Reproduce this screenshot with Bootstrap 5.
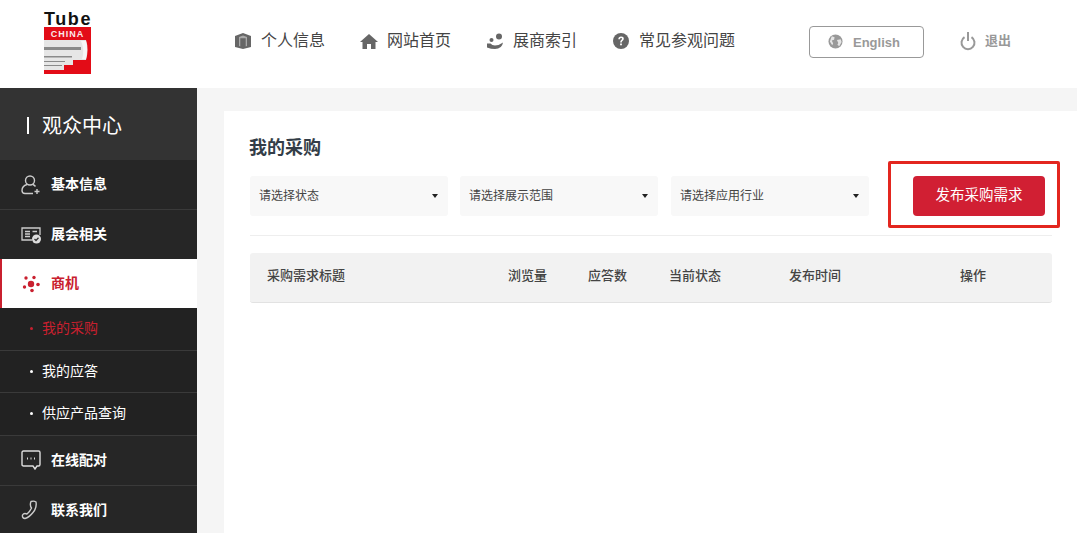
<!DOCTYPE html>
<html lang="zh-CN">
<head>
<meta charset="utf-8">
<title>观众中心</title>
<link rel="stylesheet" href="https://cdn.jsdelivr.net/npm/bootstrap@5.3.0/dist/css/bootstrap.min.css">
<style>
html,body{height:533px;overflow:hidden}
body{font-family:"Liberation Sans","Noto Sans CJK SC",sans-serif;background:#f5f5f5;color:#333;position:relative}
.top-bar{height:88px;background:#fff}
.logo-box{width:234px;flex:none;padding-left:44px;padding-top:12px;height:88px}
.logo-word{font-size:18px;font-weight:700;line-height:15px;letter-spacing:1.6px;color:#111;width:47px;white-space:nowrap}
.logo-art{display:block;width:47px;height:47px}
.top-link{width:126px;flex:none;font-size:16px;color:#444;margin-top:-7px;text-decoration:none}
.top-link svg{width:18px;height:18px;margin-right:9px;flex:none;fill:#666}
.lang-btn{width:115px;height:32px;margin-left:71px;margin-top:-5px;border:1px solid #999;border-radius:4px;font-size:13px;font-weight:700;color:#999;background:#fff;gap:10px;padding:2px 0 0 18px}
.lang-btn svg{width:15px;height:15px;fill:#999;margin-top:-2px}
.exit-link{margin-left:36px;margin-top:-6px;font-size:13px;font-weight:700;color:#999;gap:9px;text-decoration:none}
.exit-link svg{width:16px;height:20px}
.page-body{height:445px}
.side-col{width:197px;flex:none;background:#262626;height:445px;overflow:hidden}
.side-title{height:72px;background:#333;color:#fff;font-size:20px;padding:3px 0 0 27px;gap:13px}
.side-bar-mark{width:2px;height:17px;background:#fff}
.side-row{height:50px;border-bottom:1px solid #3a3a3a;padding-left:21px;color:#fff;font-size:14px;font-weight:700;gap:10px;text-decoration:none}
.side-row svg{width:20px;height:20px;flex:none}
.side-row.row-short{height:49px;border-bottom:0}
.side-row.is-on{height:49px;background:#fff;color:#c9202f;border-left:2px solid #c9202f;padding-left:19px;border-bottom:0}
.side-sub{height:42.5px;border-bottom:1px solid #3a3a3a;padding-left:30px;color:#fff;font-size:14px;gap:9px;background:#222;text-decoration:none}
.side-sub.is-on{color:#c9202f}
.side-sub i{width:3px;height:3px;background:currentColor;border-radius:50%}
.main-col{padding:23px 0 0 27px}
.panel-box{background:#fff;height:422px;padding:25px 25px 0 26px}
.panel-title{font-size:18px;font-weight:700;color:#333d47;line-height:24px;margin:0 0 16px -1px}
.filter-row{height:40px;gap:12px}
.fake-select{width:198px;height:40px;background:#f8f8f8;border-radius:3px;font-size:12px;color:#444;padding:0 10px 0 9px}
.fake-select::after{content:"";border-top:4px solid #222;border-left:3.5px solid transparent;border-right:3.5px solid transparent}
.sel-third{margin-left:1px}
.publish-btn{width:132px;height:40px;margin-left:32px;background:#d11f33;border:0;border-radius:4px;color:#fff;font-size:14.5px;padding:0}
.rule-line{border-top:1px solid #eee;margin:19px 0 17px;width:802px}
.head-row{width:802px;height:50px;background:#f2f2f2;border-bottom:1px solid #e2e2e2;border-radius:3px;font-size:13px;font-weight:500;color:#444;margin:0;padding-bottom:3px}
.head-row>div{padding:0;flex:none}
.c1{width:258px;padding-left:17px!important}.c2{width:80px}.c3{width:81px}.c4{width:120px}.c5{width:171px}.c6{width:92px}
.mark-box{position:absolute;left:888px;top:161px;width:172px;height:67px;border:3px solid #e3261f;border-radius:2px;pointer-events:none}
</style>
</head>
<body>
<header class="top-bar d-flex align-items-center">
  <div class="logo-box">
    <div class="logo-word">Tube</div>
    <svg class="logo-art" viewBox="0 0 47 47" aria-hidden="true">
      <rect width="47" height="47" fill="#e30c17"/>
      <text x="23.5" y="9.500" text-anchor="middle" font-family="Liberation Sans" font-weight="700" font-size="9" letter-spacing="1" fill="#fbeaea">CHINA</text>
      <path d="M0 13H42Q45 22 42 33H29V38H20V43H0Z" fill="#e6e6e6"/>
      <path d="M0 20H37V23H0ZM0 29H28V30.500H0ZM0 34H21V35H0ZM0 38H18V39H0Z" fill="#8a8a8a"/>
      <path d="M37 14H42Q44 22 42 32H38Q41 23 37 14Z" fill="#f7f7f7"/>
    </svg>
  </div>
  <a class="top-link d-flex align-items-center" href="#"><svg viewBox="0 0 18 18"><path d="M9 1 17 4V15L9 17 1 15V4Z"/><path d="M5 5 9 3.600 13 5V14L11.700 14.500V6.200H6.300V14.500L5 14Z" fill="#aaa"/></svg>个人信息</a>
  <a class="top-link d-flex align-items-center" href="#"><svg viewBox="0 0 18 18"><path d="M9 2 18 10H15.500V17H11V12H7V17H2.500V10H0Z"/></svg>网站首页</a>
  <a class="top-link d-flex align-items-center" href="#"><svg viewBox="0 0 18 18"><circle cx="13" cy="4.500" r="3"/><circle cx="5.500" cy="8" r="2"/><path d="M1 11.500H4.500Q6 13.500 9 13.500 13 13.500 17 10.500 16 17 9 17 5 17 1 15.500Z"/></svg>展商索引</a>
  <a class="top-link d-flex align-items-center" href="#"><svg viewBox="0 0 18 18"><circle cx="9" cy="9" r="8"/><path d="M6.300 7.200Q6.400 4.500 9.100 4.500 11.800 4.500 11.800 6.800 11.800 8.100 10.400 8.900 9.800 9.300 9.800 10.500H8.200Q8.100 8.600 9.300 7.900 10.100 7.400 10.100 6.800 10.100 6 9.100 6 8 6 7.900 7.200ZM8.100 11.500H9.900V13.300H8.100Z" fill="#fff"/></svg>常见参观问题</a>
  <button type="button" class="lang-btn d-flex align-items-center"><svg viewBox="0 0 16 16"><circle cx="8" cy="8" r="7.500"/><path d="M4 2.500 7 3.500 6.500 6 4 7 5.500 10 4.500 12 2 8ZM9.500 6.500 13.500 5.500 14.500 8.500 12 13 10 11.500 11 9.500Z" fill="#fff" opacity=".75"/></svg>English</button>
  <a class="exit-link d-flex align-items-center" href="#"><svg viewBox="0 0 16 20" fill="none" stroke="#999" stroke-width="2"><path d="M4.500 6.200A6.500 6.500 0 1 0 11.500 6.200"/><path d="M8 1V10"/></svg>退出</a>
</header>
<div class="page-body d-flex">
  <aside class="side-col">
    <div class="side-title d-flex align-items-center"><span class="side-bar-mark"></span><span>观众中心</span></div>
    <a class="side-row d-flex align-items-center" href="#"><svg viewBox="0 0 20 20" fill="none" stroke="#ccc" stroke-width="1.400"><circle cx="9" cy="5.500" r="4.500"/><path d="M6 9.500Q1 11 1 15.500 1 18.500 4 18.500H12"/><path d="M12 9.500Q13.500 10.200 14.500 11.500M16 14V19M13.500 16.500H18.500"/></svg>基本信息</a>
    <a class="side-row row-short d-flex align-items-center" href="#"><svg viewBox="0 0 20 20" fill="none" stroke="#ccc" stroke-width="1.300"><path d="M11 15H1V3H19V10"/><path d="M4 6.500H9M4 9H9M4 11.500H9M11.500 6.500H16"/><circle cx="15.500" cy="14" r="4.500" fill="#ddd" stroke="none"/><path d="M13.500 14 15 15.500 17.500 12.800" stroke="#333"/></svg>展会相关</a>
    <a class="side-row is-on d-flex align-items-center" href="#"><svg viewBox="0 0 20 20" fill="#c9202f"><circle cx="10" cy="10" r="3.200"/><circle cx="5" cy="4" r="1.700"/><circle cx="13" cy="3.500" r="1.700"/><circle cx="17" cy="10.500" r="1.800"/><circle cx="3.500" cy="13" r="1.700"/><circle cx="11" cy="16.500" r="1.800"/></svg>商机</a>
    <a class="side-sub is-on d-flex align-items-center" href="#"><i></i>我的采购</a>
    <a class="side-sub d-flex align-items-center" href="#"><i></i>我的应答</a>
    <a class="side-sub d-flex align-items-center" href="#"><i></i>供应产品查询</a>
    <a class="side-row d-flex align-items-center" href="#"><svg viewBox="0 0 20 20" fill="none" stroke="#ddd" stroke-width="1.400"><path d="M12 16H2.500Q1 16 1 14.500V2.500Q1 1 2.500 1H17.500Q19 1 19 2.500V14.500Q19 16 17.500 16H16L14 19Z"/><path d="M6 8.500H7M9.500 8.500H10.500M13 8.500H14" stroke-width="1.800"/></svg>在线配对</a>
    <a class="side-row d-flex align-items-center" href="#"><svg viewBox="0 0 20 20" fill="none" stroke="#ccc" stroke-width="1.400"><path d="M10 1.500Q13 .5 15 2 16 8 12 12.500 8 17.500 4 18.500 1 18 1.500 15 3 12.500 6 14 9 11.500 10.500 8 8.500 5 10 1.500Z"/></svg>联系我们</a>
  </aside>
  <main class="main-col flex-grow-1">
    <section class="panel-box">
      <h1 class="panel-title">我的采购</h1>
      <div class="filter-row d-flex align-items-center">
        <div class="fake-select d-flex align-items-center justify-content-between">请选择状态</div>
        <div class="fake-select d-flex align-items-center justify-content-between">请选择展示范围</div>
        <div class="fake-select sel-third d-flex align-items-center justify-content-between">请选择应用行业</div>
        <button type="button" class="publish-btn">发布采购需求</button>
      </div>
      <div class="rule-line"></div>
      <div class="head-row row align-items-center">
        <div class="c1">采购需求标题</div><div class="c2">浏览量</div><div class="c3">应答数</div><div class="c4">当前状态</div><div class="c5">发布时间</div><div class="c6">操作</div>
      </div>
    </section>
  </main>
</div>
<div class="mark-box"></div>
</body>
</html>
